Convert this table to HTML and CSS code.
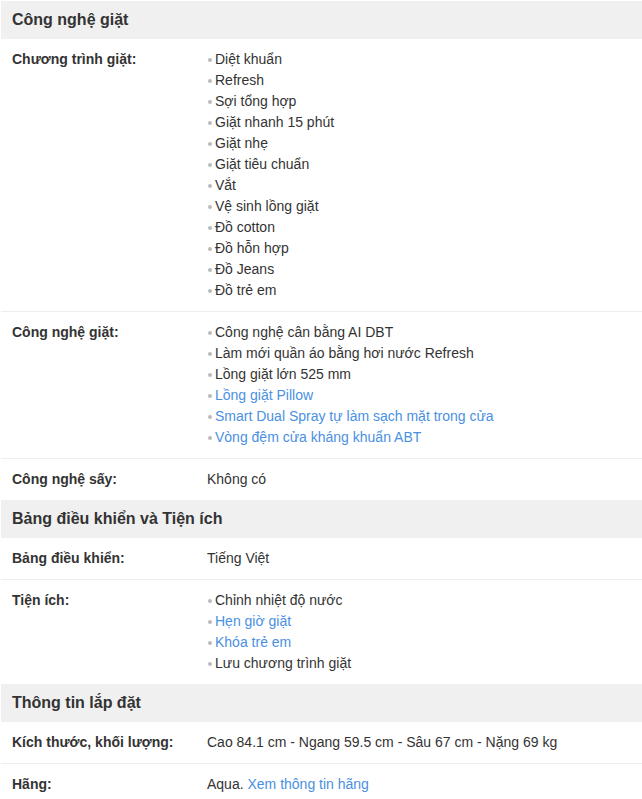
FILE: index.html
```html
<!DOCTYPE html>
<html lang="vi">
<head>
<meta charset="utf-8">
<link rel="stylesheet" href="styles.css">
</head>
<body>
<div class="specs">
  <section class="section">
    <h3 class="group">Công nghệ giặt</h3>
    <div class="row">
      <div class="label">Chương trình giặt:</div>
      <ul class="value">
        <li>Diệt khuẩn</li>
        <li>Refresh</li>
        <li>Sợi tổng hợp</li>
        <li>Giặt nhanh 15 phút</li>
        <li>Giặt nhẹ</li>
        <li>Giặt tiêu chuẩn</li>
        <li>Vắt</li>
        <li>Vệ sinh lồng giặt</li>
        <li>Đồ cotton</li>
        <li>Đồ hỗn hợp</li>
        <li>Đồ Jeans</li>
        <li>Đồ trẻ em</li>
      </ul>
    </div>
    <div class="row">
      <div class="label">Công nghệ giặt:</div>
      <ul class="value">
        <li>Công nghệ cân bằng AI DBT</li>
        <li>Làm mới quần áo bằng hơi nước Refresh</li>
        <li>Lồng giặt lớn 525 mm</li>
        <li><a href="#">Lồng giặt Pillow</a></li>
        <li><a href="#">Smart Dual Spray tự làm sạch mặt trong cửa</a></li>
        <li><a href="#">Vòng đệm cửa kháng khuẩn ABT</a></li>
      </ul>
    </div>
    <div class="row">
      <div class="label">Công nghệ sấy:</div>
      <div class="value">Không có</div>
    </div>
  </section>
  <section class="section">
    <h3 class="group">Bảng điều khiển và Tiện ích</h3>
    <div class="row">
      <div class="label">Bảng điều khiển:</div>
      <div class="value">Tiếng Việt</div>
    </div>
    <div class="row">
      <div class="label">Tiện ích:</div>
      <ul class="value">
        <li>Chỉnh nhiệt độ nước</li>
        <li><a href="#">Hẹn giờ giặt</a></li>
        <li><a href="#">Khóa trẻ em</a></li>
        <li>Lưu chương trình giặt</li>
      </ul>
    </div>
  </section>
  <section class="section">
    <h3 class="group">Thông tin lắp đặt</h3>
    <div class="row">
      <div class="label">Kích thước, khối lượng:</div>
      <div class="value">Cao 84.1 cm - Ngang 59.5 cm - Sâu 67 cm - Nặng 69 kg</div>
    </div>
    <div class="row">
      <div class="label">Hãng:</div>
      <div class="value">Aqua. <a href="#">Xem thông tin hãng</a></div>
    </div>
  </section>
</div>
</body>
</html>
```
FILE: styles.css
```css
html, body {
  margin: 0;
  padding: 0;
  background: #fff;
}
body {
  font-family: "Liberation Sans", Arial, sans-serif;
  font-size: 14px;
  line-height: 21px;
  color: #333;
}
.specs {
  padding: 1px 0 0 1px;
}
.group {
  margin: 0;
  height: 38px;
  background: #f0f0f0;
  font-size: 16px;
  font-weight: bold;
  line-height: 38px;
  padding: 0 11px;
  color: #333;
}
.row {
  display: flex;
  padding: 10px 0;
  border-bottom: 1px solid #eee;
}
.row:last-child {
  border-bottom: none;
}
.label {
  width: 195px;
  flex: none;
  padding-left: 11px;
  font-weight: bold;
}
.value {
  margin: 0;
  padding: 0;
  list-style: none;
}
.value li {
  position: relative;
  padding-left: 8px;
}
.value li::before {
  content: "";
  position: absolute;
  left: 1px;
  top: 9px;
  width: 4px;
  height: 4px;
  border-radius: 50%;
  background: #bbb;
}
a {
  color: #4a90e2;
  text-decoration: none;
}
```
